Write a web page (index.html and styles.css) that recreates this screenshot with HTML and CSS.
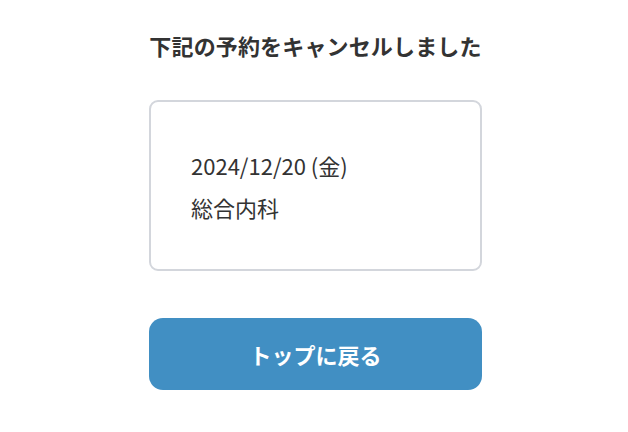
FILE: index.html
```html
<!DOCTYPE html>
<html lang="ja">
<head>
<meta charset="utf-8">
<title>予約キャンセル完了</title>
<link rel="stylesheet" href="styles.css">
</head>
<body>
<main class="page">
  <h1 class="title">下記の予約をキャンセルしました</h1>
  <section class="card">
    <p class="card-line">2024/12/20 (金)</p>
    <p class="card-line">総合内科</p>
  </section>
  <a class="back-button" href="#">トップに戻る</a>
</main>
</body>
</html>
```
FILE: styles.css
```css
* { box-sizing: border-box; }
html, body {
  margin: 0;
  padding: 0;
  background: #ffffff;
}
body {
  padding-left: 3px;
  font-family: "Noto Sans CJK JP", "Noto Sans", sans-serif;
  color: #333333;
}
.page {
  width: 333px;
  margin: 0 auto;
  padding-top: 29px;
  display: flex;
  flex-direction: column;
}
.title {
  margin: 0;
  font-size: 22px;
  line-height: 33px;
  font-weight: 700;
  letter-spacing: 0.15px;
  text-align: center;
  color: #333333;
}
.card {
  margin-top: 38px;
  border: 2px solid #d3d6dc;
  border-radius: 9px;
  padding: 47px 40px 45px;
  display: flex;
  flex-direction: column;
  gap: 9px;
}
.card-line {
  margin: 0;
  font-size: 22px;
  line-height: 33px;
  color: #333333;
}
.back-button {
  margin-top: 47px;
  height: 72px;
  border-radius: 14px;
  background: #418fc3;
  color: #ffffff;
  font-size: 22px;
  font-weight: 700;
  text-decoration: none;
  display: flex;
  align-items: center;
  justify-content: center;
}
```
